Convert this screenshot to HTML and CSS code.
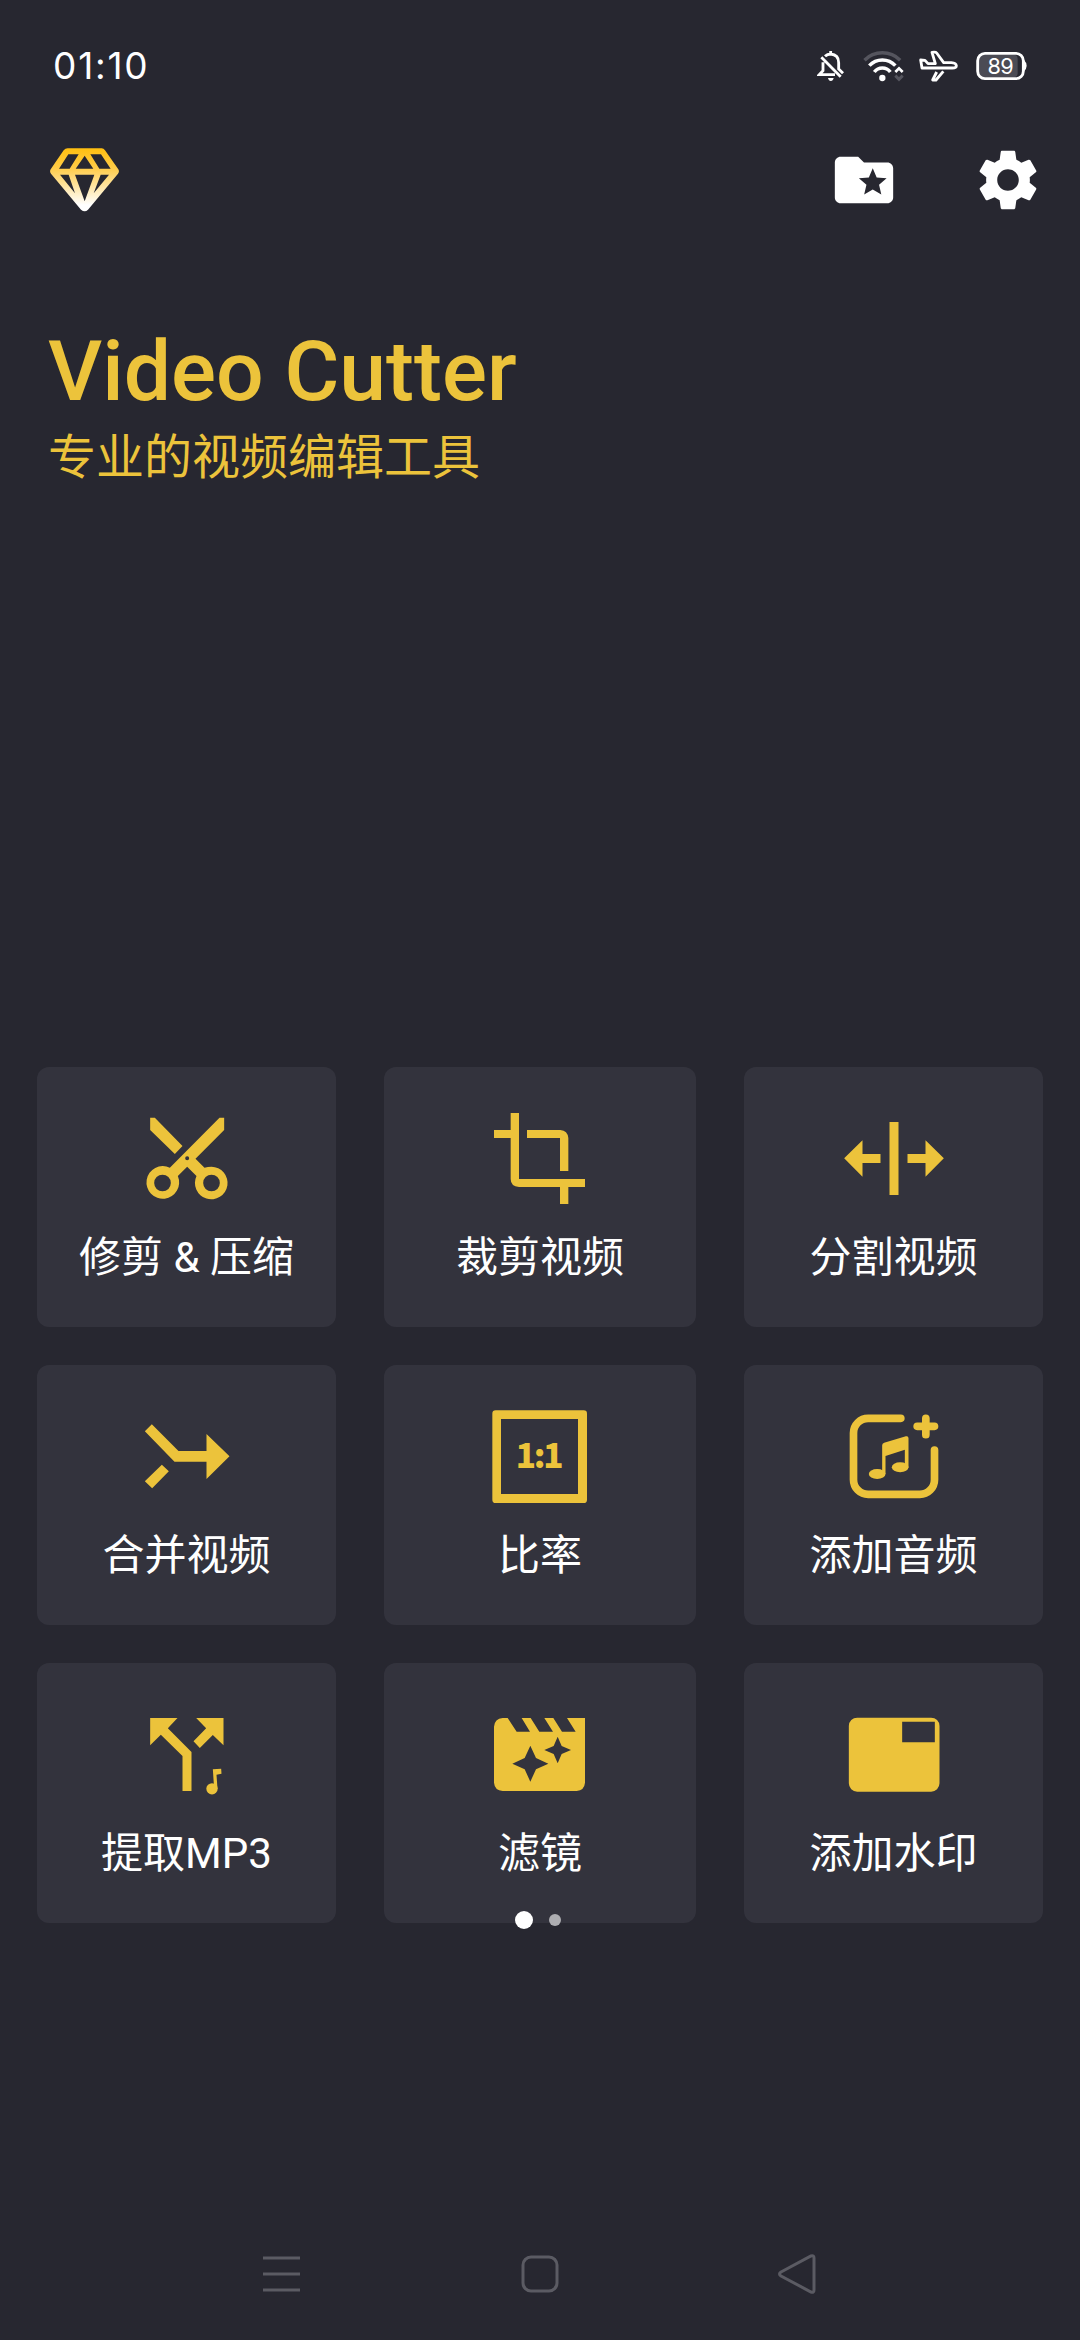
FILE: index.html
```html
<!DOCTYPE html>
<html lang="zh-CN">
<head>
<meta charset="utf-8">
<title>Video Cutter</title>
<link rel="stylesheet" href="styles.css">
</head>
<body>
<div class="screen">
  <div class="statusbar">
    <span class="clock">01:10</span>
    <div class="status-icons">
      <svg class="st-bell" viewBox="80 54 84 108" fill="none" stroke="#fff" stroke-width="8.500">
        <path d="M93 82L151 140M98 97V122L87 134H134M104 79Q111 72 121 72Q145 74 145 98V117L158 130M121 63V72"/>
        <path d="M113 144H130Q128 153 121.500 153T113 144Z" fill="#fff" stroke="none"/>
      </svg>
      <svg class="st-wifi" viewBox="218 54 126 108" fill="none" stroke="#fff" stroke-width="10.500">
        <path d="M222.500 90.500A76 76 0 0 1 329.500 90.500" stroke="#55555e"/>
        <path d="M237 107A53 53 0 0 1 315 107M252 126A30 30 0 0 1 300 126"/>
        <circle cx="276" cy="144" r="9.500" fill="#fff" stroke="none"/>
        <path d="M315 126L326 115L337 126" stroke-width="8"/>
        <path d="M315 137L326 148L337 137" stroke="#55555e" stroke-width="9"/>
      </svg>
      <svg class="st-plane" viewBox="383 54 120 108" fill="none" stroke="#fff" stroke-width="8.500" stroke-linejoin="round">
        <path d="M391 90L395 114H486Q498 114 498 107Q497 99 483 98H460L439 69Q436 65 425 67L435 101H413L404 91Z"/>
        <path d="M439 126L427 150H437L459 124"/>
      </svg>
      <svg class="st-battery" viewBox="554 54 157 108">
        <rect x="566" y="74" width="116" height="68" rx="12" fill="#4b4b54"/>
        <rect x="562" y="70" width="137" height="76" rx="22" fill="none" stroke="#fff" stroke-width="8.500"/>
        <path d="M701 90Q709 98 709 107T701 124Z" fill="#fff"/>
        <text class="battery-text" x="630" y="131" text-anchor="middle">89</text>
      </svg>
    </div>
  </div>

  <div class="header">
    <svg class="ic-gem" viewBox="60 356 207 192">
      <defs><linearGradient id="gem" x1="0" y1="0" x2="0" y2="1"><stop offset="0" stop-color="#ffbf10"/><stop offset=".3" stop-color="#ffcb45"/><stop offset=".9" stop-color="#fff"/></linearGradient></defs>
      <path fill="url(#gem)" fill-rule="evenodd" d="M113 357H215Q221 357 225 363L265 420Q269 427 264 433L174 541Q169 546 164 546T153 541L63 433Q58 427 62 420L101 363Q106 357 113 357ZM115 375L87 418H119L146 375ZM164 379L137 418H190ZM181 375L208 418H242L213 375ZM90 436L135 492L116 436ZM135 436L164 516L193 436ZM212 436L191 492L237 436Z"/>
    </svg>
    <div class="actions">
      <svg class="ic-folder" viewBox="0 0 24 24" fill="#fff"><path d="M20 6h-8l-2-2H4c-1.100 0-2 .9-2 2v12c0 1.100.9 2 2 2h16c1.100 0 2-.9 2-2V8c0-1.100-.9-2-2-2zm-2.060 11L15 15.280 12.060 17l.78-3.330-2.590-2.240 3.410-.29L15 8l1.340 3.140 3.410.29-2.590 2.240.78 3.330z"/></svg>
      <svg class="ic-gear" viewBox="0 0 24 24" fill="#fff"><path d="M19.430 12.980c.04-.32.07-.64.07-.98s-.03-.66-.07-.98l2.110-1.650c.19-.15.24-.42.12-.64l-2-3.460c-.12-.22-.39-.3-.61-.22l-2.490 1c-.52-.4-1.080-.73-1.690-.98l-.38-2.650C14.460 2.180 14.250 2 14 2h-4c-.25 0-.46.18-.49.42l-.38 2.650c-.61.25-1.170.59-1.690.98l-2.490-1c-.23-.09-.49 0-.61.22l-2 3.460c-.13.22-.07.49.12.64l2.110 1.650c-.04.32-.07.65-.07.98s.03.66.07.98l-2.110 1.650c-.19.15-.24.42-.12.64l2 3.460c.12.22.39.3.61.22l2.490-1c.52.4 1.080.73 1.690.98l.38 2.650c.03.24.24.42.49.42h4c.25 0 .46-.18.49-.42l.38-2.650c.61-.25 1.170-.59 1.690-.98l2.490 1c.23.09.49 0 .61-.22l2-3.460c.12-.22.07-.49-.12-.64l-2.110-1.650zM12 15.700c-2.040 0-3.700-1.660-3.700-3.700s1.660-3.700 3.700-3.700 3.700 1.660 3.700 3.700-1.660 3.700-3.700 3.700z"/></svg>
    </div>
  </div>

  <div class="intro">
    <h1 class="title">Video Cutter</h1>
    <p class="subtitle">专业的视频编辑工具</p>
  </div>

  <div class="grid">
    <div class="card">
      <svg class="icon" viewBox="319.500 171 360 300"><path fill-rule="evenodd" d="M389 203H403L486 288L463 312L389 240ZM597 203H611V240L525 326L552 353Q562 350 573 350A49 49 0 1 1 528 378L500 350L472 378A49 49 0 1 1 448 353ZM506 325A6 6 0 1 0 494 325A6 6 0 1 0 506 325ZM451 399A25 25 0 1 0 401 399A25 25 0 1 0 451 399ZM598 399A25 25 0 1 0 548 399A25 25 0 1 0 598 399Z"/></svg>
      <span class="label">修剪 &amp; 压缩</span>
    </div>
    <div class="card">
      <svg class="icon" viewBox="330 171 360 300"><path d="M372 240H422V189H447V387H645V411H595V462H570V411H447Q422 409 422 387V264H372ZM471 240H571Q593 242 595 264V363H570V264H471Z"/></svg>
      <span class="label">裁剪视频</span>
    </div>
    <div class="card">
      <svg class="icon" viewBox="310.500 171 360 300"><path d="M341 325L396 271V312H450V339H396V380ZM477 216H504V435H477ZM640 325L585 271V312H531V339H585V380Z"/></svg>
      <span class="label">分割视频</span>
    </div>
    <div class="card">
      <svg class="icon" viewBox="319.500 165 360 300"><path d="M373 244L394 223L474 303H558V252L627 319L558 387V335H462ZM424 344L445 364L395 415L373 394Z"/></svg>
      <span class="label">合并视频</span>
    </div>
    <div class="card">
      <svg class="icon" viewBox="330 165 360 300"><path fill-rule="evenodd" d="M377 181H641Q651 181 651 191V449Q651 459 641 459H377Q367 459 367 449V191Q367 181 377 181ZM393 207V432H624V207Z"/><text class="ratio-text" x="509" y="355" text-anchor="middle" textLength="144">1:1</text></svg>
      <span class="label">比率</span>
    </div>
    <div class="card">
      <svg class="icon" viewBox="310.500 165 360 300">
        <path class="line" d="M511 205H413A44 44 0 0 0 369 249V389A44 44 0 0 0 413 433H568A44 44 0 0 0 612 389V300M586 205V254M560 229H612"/>
        <path d="M455 286Q455 280 461 278L526 259Q534 257 534 265V352H523V299L465 318V372H455Z"/><ellipse cx="440" cy="372" rx="25" ry="15"/><ellipse cx="509" cy="352" rx="25" ry="15"/>
      </svg>
      <span class="label">添加音频</span>
    </div>
    <div class="card">
      <svg class="icon" viewBox="319.500 159 360 300"><path d="M389 204H471L442 235L513 306V423H486V318L421 254L389 286ZM527 204H609V286L577 255L538 294L519 274L557 235ZM577 358L602 356L603 371L588 374L591 417H581Z"/><circle cx="574.500" cy="416.500" r="17"/></svg>
      <span class="label">提取MP3</span>
    </div>
    <div class="card">
      <svg class="icon" viewBox="330 159 360 300"><path fill-rule="evenodd" d="M398 204H413L440 245H480L455 204H482L508 245H549L523 204H550L576 245H617L591 204H645V398Q643 421 620 423H398Q374 421 372 398V230Q374 206 398 204ZM481 287L464 324L427 341L464 358L481 395L498 358L535 341L498 324ZM563 260L551 288L523 300L551 312L563 340L575 312L603 300L575 288Z"/></svg>
      <span class="label">滤镜</span>
    </div>
    <div class="card">
      <svg class="icon" viewBox="310.500 159 360 300"><path fill-rule="evenodd" d="M380 203H602A25 25 0 0 1 627 228V400A25 25 0 0 1 602 425H380A25 25 0 0 1 355 400V228A25 25 0 0 1 380 203ZM515 215V277H613V215Z"/></svg>
      <span class="label">添加水印</span>
    </div>
  </div>
  <div class="pager"><span class="dot dot-active"></span><span class="dot"></span></div>

  <div class="navbar">
    <svg class="nav-icon" viewBox="0 0 44 44"><path d="M3 6H40M3 22H40M3 38H40"/></svg>
    <svg class="nav-icon" viewBox="0 0 44 44"><rect x="5" y="5" width="34" height="34" rx="8"/></svg>
    <svg class="nav-icon" viewBox="0 0 44 44"><path d="M5 20L35 4Q38 3 38 6V38Q38 41 35 40L5 24Q2 22 5 20Z"/></svg>
  </div>
</div>
</body>
</html>
```
FILE: styles.css
```css
* { box-sizing: border-box; }

body {
  margin: 0;
  background: #272730;
  color: #fff;
  font-family: Roboto, "Noto Sans CJK SC", sans-serif;
}

.screen {
  width: 1080px;
  height: 2340px;
  display: flex;
  flex-direction: column;
  overflow: hidden;
}

svg { display: block; flex: none; }

.statusbar {
  height: 132px;
  padding: 0 53px;
  display: flex;
  align-items: center;
  justify-content: space-between;
}

.clock {
  font-family: Inter, sans-serif;
  font-size: 37px;
  line-height: 44px;
  letter-spacing: 1.8px;
}

.status-icons { display: flex; }
.status-icons svg { height: 36px; }
.st-bell { width: 28px; margin-right: 18px; }
.st-wifi { width: 42px; margin-right: 13px; }
.st-plane { width: 40px; margin-right: 17px; }
.st-battery { width: 52.33px; }

.battery-text {
  font-family: Inter, sans-serif;
  font-size: 65px;
  font-weight: 400;
  letter-spacing: -2px;
  fill: #fff;
}

.header {
  height: 96px;
  padding: 0 37px 0 50px;
  display: flex;
  align-items: center;
  justify-content: space-between;
}

.ic-gem { width: 69px; height: 64px; }
.actions { display: flex; align-items: center; gap: 74px; }
.ic-folder, .ic-gear { width: 70px; height: 70px; }

.intro {
  height: 839px;
  padding: 95px 48px 0;
  color: #ecc33b;
}

.title {
  margin: 0;
  font-size: 84px;
  font-weight: 500;
  line-height: 98px;
}

.subtitle {
  margin: 2px 0 0;
  font-size: 48px;
  line-height: 70px;
}

.grid {
  padding: 0 37px;
  display: grid;
  grid-template-columns: 299px 312px 299px;
  column-gap: 48px;
  grid-auto-rows: 260px;
  row-gap: 38px;
}

.card {
  padding-top: 40px;
  display: flex;
  flex-direction: column;
  align-items: center;
  border-radius: 12px;
  background: #33333d;
}

.icon { width: 120px; height: 100px; fill: #ecc33b; }

.line {
  fill: none;
  stroke: #ecc33b;
  stroke-width: 23px;
  stroke-linecap: round;
}

.ratio-text {
  font-family: "Noto Sans CJK SC", sans-serif;
  font-size: 100px;
  font-weight: 900;
}

.label {
  margin-top: 21px;
  font-size: 42px;
  line-height: 60px;
  white-space: nowrap;
}

.pager {
  height: 18px;
  margin-top: -12px;
  padding-right: 4px;
  display: flex;
  align-items: center;
  justify-content: center;
  gap: 16px;
}

.dot {
  width: 12px;
  height: 12px;
  border-radius: 50%;
  background: #adadb1;
}

.dot-active { width: 18px; height: 18px; background: #fff; }

.navbar {
  margin-top: auto;
  height: 132px;
  padding: 0 260px;
  display: flex;
  align-items: center;
  justify-content: space-between;
}

.nav-icon {
  width: 44px;
  height: 44px;
  fill: none;
  stroke: #5b5b63;
  stroke-width: 3px;
}
```
